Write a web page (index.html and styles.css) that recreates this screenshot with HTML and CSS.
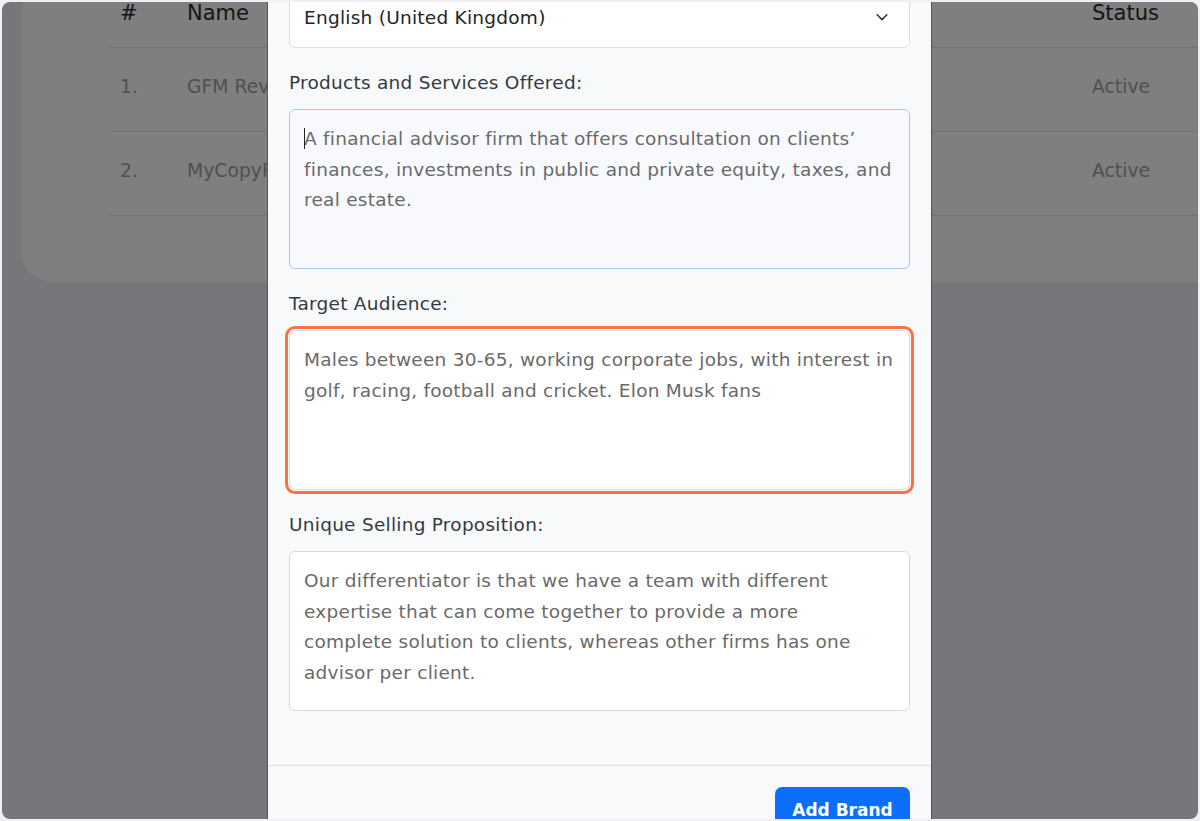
FILE: index.html
```html
<!DOCTYPE html>
<html lang="en">
<head>
  <meta charset="UTF-8">
  <meta name="viewport" content="width=device-width, initial-scale=1.0">
  <link rel="stylesheet" href="styles.css">
  <title>Brands</title>
</head>
<body class="page">
  <div class="frame">
    <section class="card">
      <div class="table">
        <div class="table__row table__row_head">
          <div class="table__cell">#</div>
          <div class="table__cell">Name</div>
          <div class="table__cell">Status</div>
        </div>
        <div class="table__row">
          <div class="table__cell">1.</div>
          <div class="table__cell">GFM Review</div>
          <div class="table__cell">Active</div>
        </div>
        <div class="table__row">
          <div class="table__cell">2.</div>
          <div class="table__cell">MyCopyPro</div>
          <div class="table__cell">Active</div>
        </div>
      </div>
    </section>

    <!-- add brand modal -->
    <div class="modal">
      <div class="modal__body">
        <div class="select">
          <span class="select__value">English (United Kingdom)</span>
          <svg class="select__arrow" width="14" height="14" viewBox="0 0 16 16" fill="none">
            <path d="M2.5 5.5L8 11l5.5-5.5" stroke="#343a40" stroke-width="1.8" stroke-linecap="round" stroke-linejoin="round"/>
          </svg>
        </div>

        <div class="field">
          <label class="field__label">Products and Services Offered:</label>
          <div class="field__wrap">
            <textarea class="field__input field__input_focus">A financial advisor firm that offers consultation on clients’
finances, investments in public and private equity, taxes, and
real estate.</textarea>
            <span class="field__caret"></span>
          </div>
        </div>

        <div class="field">
          <label class="field__label">Target Audience:</label>
          <textarea class="field__input field__input_marked">Males between 30-65, working corporate jobs, with interest in
golf, racing, football and cricket. Elon Musk fans</textarea>
        </div>

        <div class="field">
          <label class="field__label">Unique Selling Proposition:</label>
          <textarea class="field__input">Our differentiator is that we have a team with different
expertise that can come together to provide a more
complete solution to clients, whereas other firms has one
advisor per client.</textarea>
        </div>
      </div>

      <div class="modal__footer">
        <button class="button">Add Brand</button>
      </div>
    </div>
  </div>
</body>
</html>
```

FILE: styles.css
```css
html, .page {
  margin: 0;
  min-height: 100vh;
  font-family: 'DejaVu Sans', 'Open Sans', sans-serif;
  background: #eef0f4;
  overflow: hidden;
}

* {
  box-sizing: border-box;
}

.frame {
  position: relative;
  margin: 2px;
  height: 817px;
  border-radius: 8px;
  overflow: hidden;
  background: #76777a;
}

.card {
  margin: -25px 0 0 20px;
  padding: 0 0 66px 87px;
  background: #7f7f7f;
  border-bottom-left-radius: 30px;
}

.table__row {
  display: grid;
  grid-template-columns: 67px 1fr 117px;
  align-items: center;
  height: 84px;
  padding-bottom: 7px;
  border-bottom: 1px solid #707070;
  color: #505050;
  font-size: 18.8px;
}

.table__row_head {
  height: 71px;
  padding: 28px 0 0;
  align-items: start;
  line-height: 16px;
  color: #141414;
  font-size: 21px;
}

.table__cell {
  padding-left: 11px;
  white-space: nowrap;
}

.modal {
  position: absolute;
  top: -40px;
  left: 265px;
  width: 665px;
  background: #f8f9fb;
  border-left: 1px solid #55565a;
  border-right: 1px solid #55565a;
}

.modal__body {
  padding: 24px 21px 54px;
}

.select {
  display: flex;
  align-items: center;
  justify-content: space-between;
  height: 62px;
  padding: 0 20px 0 14px;
  background: #fff;
  border: 1px solid #dcdfe4;
  border-radius: 6px;
  font-size: 18.5px;
  letter-spacing: 0.25px;
  color: #212529;
}

.field {
  margin-top: 22px;
}

.field__label {
  display: block;
  line-height: 26px;
  margin-bottom: 13px;
  font-size: 18.5px;
  letter-spacing: 0.25px;
  color: #343a40;
}

.field__wrap {
  position: relative;
}

.field__input {
  display: block;
  width: 100%;
  height: 160px;
  margin: 0;
  padding: 14px 14px 12px;
  resize: none;
  white-space: pre;
  overflow: hidden;
  background: #fff;
  border: 1px solid #d6d9de;
  border-radius: 6px;
  font-family: inherit;
  font-size: 18.5px;
  letter-spacing: 0.25px;
  line-height: 30.7px;
  color: #6a6a6a;
}

.field__input_focus {
  background: #f8f9fd;
  border-color: #a3c6fb;
}

.field__input_marked {
  box-shadow: 0 0 0 1px #fff, 0 0 0 4px #fb7141;
}

.field__caret {
  position: absolute;
  top: 19px;
  left: 15px;
  width: 1px;
  height: 21px;
  background: #222;
}

.modal__footer {
  display: flex;
  justify-content: flex-end;
  padding: 21px 21px 30px;
  border-top: 1px solid #dee1e6;
}

.button {
  width: 135px;
  height: 46px;
  border: 0;
  border-radius: 7px;
  background: #0d6efd;
  color: #fff;
  font-family: inherit;
  font-size: 17px;
  font-weight: 600;
}
```
